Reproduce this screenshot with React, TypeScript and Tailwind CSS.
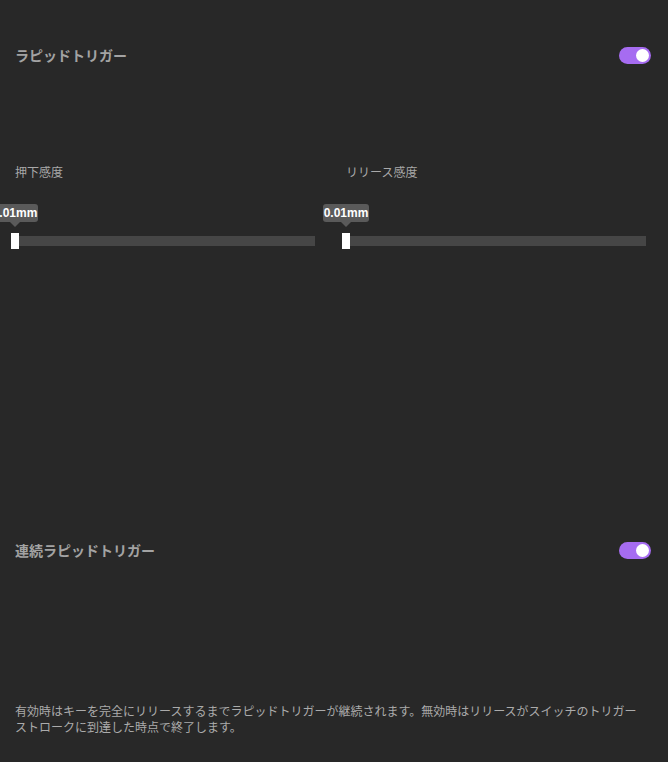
import React, { useState } from "react";

const jp = "font-['Noto_Sans_CJK_JP',sans-serif]";

const Toggle = ({ on, onChange }: { on: boolean; onChange: () => void }) => (
  <button
    onClick={onChange}
    className={`relative h-[17px] w-[32px] rounded-full ${on ? "bg-[#a66cf1]" : "bg-[#555]"}`}
  >
    <span
      className={`absolute top-[2px] h-[13px] w-[13px] rounded-full bg-white ${on ? "left-[17px]" : "left-[2px]"}`}
    />
  </button>
);

const Slider = ({ label, value }: { label: string; value: string }) => (
  <div className="flex w-[300px] flex-col">
    <div className={`${jp} h-[16px] text-[12px] leading-[16px] text-[#a9a9a9]`}>{label}</div>
    <div className="relative mt-[22px] h-[47px]">
      {/* value bubble */}
      <div className="absolute left-[-23px] top-[2px] flex flex-col items-center">
        <div className="flex h-[18px] w-[46px] items-center justify-center rounded-[3px] bg-[#5a5a5a] font-['Liberation_Sans',sans-serif] text-[12px] font-bold text-white">
          {value}
        </div>
        <div className="h-0 w-0 border-x-[5px] border-t-[5px] border-x-transparent border-t-[#5a5a5a]" />
      </div>
      <div className="absolute bottom-[3px] left-0 h-[10px] w-[300px] bg-[#464646]" />
      <div className="absolute bottom-0 left-[-4px] h-[16px] w-[8px] bg-white" />
    </div>
  </div>
);

export default function App() {
  const [rt, setRt] = useState(true);
  const [cont, setCont] = useState(true);

  return (
    <div className={`${jp} min-h-screen w-full overflow-hidden bg-[#282828]`}>
      <div className="pl-[15px] pr-[17px] pt-[47px]">
        <div className="flex h-[17px] items-center justify-between">
          <span className="text-[14px] font-bold text-[#a3a3a3]">ラピッドトリガー</span>
          <Toggle on={rt} onChange={() => setRt(!rt)} />
        </div>
      </div>

      <div className="mt-[100px] flex gap-[31px] pl-[15px]">
        <Slider label="押下感度" value="0.01mm" />
        <Slider label="リリース感度" value="0.01mm" />
      </div>

      <div className="pl-[15px] pr-[17px] pt-[293px]">
        <div className="flex h-[17px] items-center justify-between">
          <span className="text-[14px] font-bold text-[#a3a3a3]">連続ラピッドトリガー</span>
          <Toggle on={cont} onChange={() => setCont(!cont)} />
        </div>
      </div>

      <p className="mt-[144px] w-[642px] pl-[15px] text-[12px] leading-[16px] text-[#ababab]">
        有効時はキーを完全にリリースするまでラピッドトリガーが継続されます。無効時はリリースがスイッチのトリガーストロークに到達した時点で終了します。
      </p>
    </div>
  );
}
